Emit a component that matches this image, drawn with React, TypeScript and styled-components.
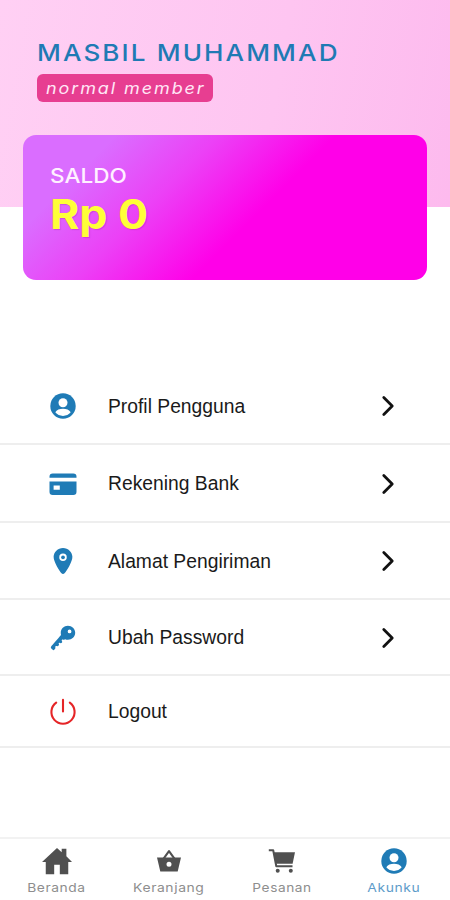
import React from 'react';
import styled, { createGlobalStyle } from 'styled-components';
import { IoChevronForward, IoHomeSharp, IoKey, IoLocation } from 'react-icons/io5';

const GlobalStyle = createGlobalStyle`
  *, *::before, *::after { box-sizing: border-box; }
  body { margin: 0; background: #fff; }
`;

const Screen = styled.main`
  display: flex;
  flex-direction: column;
  width: 450px;
  height: 900px;
  overflow: hidden;
  background: #fff;
  font-family: Inter, sans-serif;
`;

const Wide = styled.span<{ $scale: number; $origin?: string }>`
  display: inline-block;
  transform: scaleX(${({ $scale }) => $scale});
  transform-origin: ${({ $origin }) => $origin ?? 'left'} center;
`;

const Header = styled.header`
  flex: none;
  height: 207px;
  padding: 38px 23px 0;
  background: linear-gradient(100deg, #ffd0f4 0%, #fec5f1 60%, #fdbaee 100%);
`;

const Identity = styled.div`
  display: flex;
  flex-direction: column;
  align-items: flex-start;
  height: 97px;
  padding-left: 14px;
`;

const UserName = styled.h1`
  margin: 0;
  color: #1f7ab4;
  font-size: 23.5px;
  font-weight: 500;
  line-height: 30px;
  letter-spacing: 1.9px;
  white-space: nowrap;
`;

const MemberBadge = styled.div`
  width: 176px;
  height: 28px;
  margin-top: 6px;
  padding-left: 9px;
  border-radius: 6px;
  background: #e73e91;
  color: #ffe6f6;
  font-size: 16.5px;
  font-style: italic;
  font-weight: 400;
  line-height: 28px;
  letter-spacing: 1.75px;
  white-space: nowrap;
`;

const BalanceCard = styled.section`
  height: 145px;
  padding: 28px 27px;
  border-radius: 13px;
  background: linear-gradient(135deg, #da6dff 17%, #ec40f6 36%, #ff00e8 57%);
`;

const BalanceLabel = styled.div`
  color: #fff0ff;
  font-size: 20.5px;
  font-weight: 500;
  line-height: 26px;
`;

const BalanceValue = styled.div`
  color: #ffff38;
  font-size: 41px;
  font-weight: 700;
  line-height: 51px;
  text-shadow: 1px 1px 1px rgba(150, 0, 150, 0.25);
`;

const Menu = styled.ul`
  flex: 1;
  margin: 161px 0 0;
  padding: 0;
  list-style: none;
`;

const MenuRow = styled.li<{ $height: number }>`
  display: grid;
  grid-template-columns: 30px 1fr 30px;
  column-gap: 30px;
  align-items: center;
  height: ${({ $height }) => $height}px;
  padding: 1px 47px 0 48px;
  border-bottom: 2px solid #eee;
`;

const MenuLabel = styled.span`
  padding-top: 1px;
  color: #1a1a1a;
  font-family: 'Liberation Sans', Arial, sans-serif;
  font-size: 19.3px;
  line-height: 24px;
  white-space: nowrap;
`;

const MenuIcon = styled.span<{ $danger?: boolean }>`
  display: flex;
  color: ${({ $danger }) => ($danger ? '#e52527' : '#1f7bb6')};
  font-size: 30px;
`;

const Chevron = styled(IoChevronForward)`
  justify-self: center;
  color: #111;
  font-size: 30px;
`;

const TabBar = styled.nav`
  display: grid;
  grid-template-columns: repeat(4, 1fr);
  flex: none;
  height: 63px;
  border-top: 2px solid #f2f2f2;
`;

const Tab = styled.a<{ $active?: boolean }>`
  display: flex;
  flex-direction: column;
  align-items: center;
  padding: 6px 0 0 1px;
  color: ${({ $active }) => ($active ? '#1f7bb6' : '#505050')};
  font-size: 30px;
`;

const TabIcon = styled.span`
  display: flex;
  align-items: center;
  justify-content: center;
  height: 31px;
`;

const TabLabel = styled.span<{ $active?: boolean }>`
  margin-top: 4px;
  color: ${({ $active }) => ($active ? '#5e9cca' : '#8e8e8e')};
  font-size: 12px;
  line-height: 16px;
  letter-spacing: 0.5px;
`;

const Glyph = styled.svg.attrs({ viewBox: '0 0 30 30' })`
  display: block;
  width: 30px;
  height: 30px;
  fill: currentColor;
`;

const PersonIcon = () => (
  <Glyph>
    <circle cx="15" cy="15" r="12.7" />
    <circle cx="15" cy="11.8" r="4.5" fill="#fff" />
    <path d="M7.3 21.3C8.6 18.8 11.7 17.8 15 17.8s6.4 1 7.7 3.5c-1.8 2.3-4.7 3.6-7.7 3.6s-5.9-1.3-7.7-3.6z" fill="#fff" />
  </Glyph>
);

const CardIcon = () => (
  <Glyph>
    <path d="M1.5 8.8V7.6a3.2 3.2 0 0 1 3.2-3.2h20.6a3.2 3.2 0 0 1 3.2 3.2v1.2z" />
    <path
      fillRule="evenodd"
      d="M1.5 12.6h27v10.2a3.2 3.2 0 0 1-3.2 3.2H4.7a3.2 3.2 0 0 1-3.2-3.2zM5.6 16.4v4.4h6.2v-4.4z"
    />
  </Glyph>
);

const PowerIcon = () => (
  <Glyph>
    <path
      d="M8.2 5.7a11.6 11.6 0 1 0 13.6 0M15 2.9v11.6"
      fill="none"
      stroke="currentColor"
      strokeWidth="2.1"
      strokeLinecap="round"
    />
  </Glyph>
);

const BasketIcon = () => (
  <Glyph>
    <path
      d="M9.4 12.8L15 5.2l5.6 7.6"
      fill="none"
      stroke="currentColor"
      strokeWidth="2.1"
      strokeLinejoin="round"
    />
    <path
      fillRule="evenodd"
      d="M3 11.6h24l-3.3 14H6.3zM15 15.7a2.5 2.5 0 1 0 0 5 2.5 2.5 0 1 0 0-5z"
    />
  </Glyph>
);

const CartIcon = () => (
  <Glyph>
    <path
      d="M1.8 4.2h4.4l3.1 16.1h16.2"
      fill="none"
      stroke="currentColor"
      strokeWidth="2"
      strokeLinejoin="round"
    />
    <path d="M6.8 6.2h21.2l-2.4 11.5H8.8z" />
    <circle cx="10.7" cy="24.8" r="2" />
    <circle cx="23.8" cy="24.8" r="2" />
  </Glyph>
);

const menuItems = [
  { label: 'Profil Pengguna', Icon: PersonIcon, height: 77 },
  { label: 'Rekening Bank', Icon: CardIcon, height: 78 },
  { label: 'Alamat Pengiriman', Icon: IoLocation, height: 77 },
  { label: 'Ubah Password', Icon: IoKey, height: 76 },
  { label: 'Logout', Icon: PowerIcon, height: 72, danger: true },
];

const tabs = [
  { label: 'Beranda', Icon: IoHomeSharp, scale: 1.15 },
  { label: 'Keranjang', Icon: BasketIcon, scale: 1.16 },
  { label: 'Pesanan', Icon: CartIcon, scale: 1.14 },
  { label: 'Akunku', Icon: PersonIcon, active: true, scale: 1.16 },
];

export default function App() {
  return (
    <>
      <GlobalStyle />
      <Screen>
        <Header>
          <Identity>
            <UserName>
              <Wide $scale={1.11}>MASBIL MUHAMMAD</Wide>
            </UserName>
            <MemberBadge>
              <Wide $scale={1.09}>normal member</Wide>
            </MemberBadge>
          </Identity>
          <BalanceCard>
            <BalanceLabel>
              <Wide $scale={1.1}>SALDO</Wide>
            </BalanceLabel>
            <BalanceValue>
              <Wide $scale={1.09}>Rp 0</Wide>
            </BalanceValue>
          </BalanceCard>
        </Header>
        <Menu>
          {menuItems.map(({ label, Icon, height, danger }) => (
            <MenuRow key={label} $height={height}>
              <MenuIcon $danger={danger}>
                <Icon />
              </MenuIcon>
              <MenuLabel>{label}</MenuLabel>
              {!danger && <Chevron />}
            </MenuRow>
          ))}
        </Menu>
        <TabBar>
          {tabs.map(({ label, Icon, active, scale }) => (
            <Tab key={label} $active={active}>
              <TabIcon>
                <Icon />
              </TabIcon>
              <TabLabel $active={active}>
                <Wide $scale={scale} $origin="center">
                  {label}
                </Wide>
              </TabLabel>
            </Tab>
          ))}
        </TabBar>
      </Screen>
    </>
  );
}
